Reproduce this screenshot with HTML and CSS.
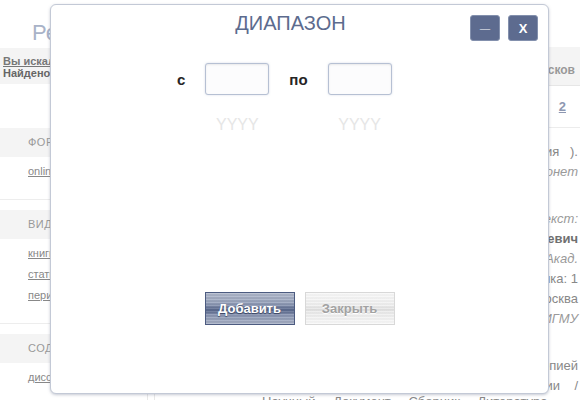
FILE: index.html
```html
<!DOCTYPE html>
<html lang="ru">
<head>
<meta charset="utf-8">
<title>Диапазон</title>
<link rel="stylesheet" href="styles.css">
</head>
<body>
<div class="page">
  <h1 class="page-title">Результаты поиска</h1>
  <div class="layout">
    <aside class="sidebar">
      <div class="query">
        <div><a class="query-link">Вы искали: диапазон</a></div>
        <div class="query-count">Найдено: 128</div>
      </div>
      <div class="facets">
        <section class="facet">
          <div class="facet-head">ФОРМАТ</div>
          <ul class="facet-list"><li><a>online</a></li></ul>
        </section>
        <section class="facet">
          <div class="facet-head">ВИД</div>
          <ul class="facet-list"><li><a>книги</a></li><li><a>статьи</a></li><li><a>периодика</a></li></ul>
        </section>
        <section class="facet">
          <div class="facet-head">СОДЕРЖАНИЕ</div>
          <ul class="facet-list"><li><a>диссертации</a></li></ul>
        </section>
      </div>
    </aside>
    <main class="results">
      <div class="thead">Кол-во поисков</div>
      <div class="pager"><a class="page-link">2</a></div>
      <div class="entries">
        <div class="group">
          <div class="line">(по материалам заседания&nbsp;&nbsp; ).</div>
          <div class="line line-italic">Серия: Электронные монет</div>
        </div>
        <div class="group">
          <div class="line line-italic">Подробный текст:</div>
          <div class="line line-bold">Петров Алексей Николаевич</div>
          <div class="line line-italic">Вестник Акад.</div>
          <div class="line">Оценка: 1</div>
          <div class="line">г. Москва</div>
          <div class="line line-italic">Изд-во МИГМУ</div>
        </div>
        <div class="group">
          <div class="line">вместе с копией</div>
          <div class="line">Материалы конференции&nbsp;&nbsp;&nbsp;&nbsp;/</div>
          <div class="line line-foot">Научный Документ Сборник Литература</div>
        </div>
      </div>
    </main>
  </div>
</div>

<div class="modal">
  <div class="modal-head">
    <h2 class="modal-title">ДИАПАЗОН</h2>
    <div class="win-controls">
      <button class="win-btn win-min">_</button>
      <button class="win-btn win-close">X</button>
    </div>
  </div>
  <div class="range">
    <span class="range-label">с</span>
    <input class="range-input" type="text">
    <span class="range-label">по</span>
    <input class="range-input" type="text">
    <span class="range-hint hint-from">YYYY</span>
    <span class="range-hint hint-to">YYYY</span>
  </div>
  <div class="modal-foot">
    <button class="btn btn-primary">Добавить</button>
    <button class="btn btn-secondary">Закрыть</button>
  </div>
</div>
</body>
</html>
```

FILE: styles.css
```css
* { box-sizing: border-box; }
html, body { margin: 0; padding: 0; }
body {
  width: 580px;
  height: 400px;
  overflow: hidden;
  position: relative;
  background: #fff;
  font-family: "Liberation Sans", Arial, sans-serif;
  color: #777;
}

/* background page */
.page { width: 580px; }
.page-title {
  margin: 0;
  height: 47px;
  padding: 20px 0 0 32px;
  font-size: 22px;
  line-height: 26px;
  font-weight: normal;
  color: #a9b3c8;
  white-space: nowrap;
}
.layout { display: flex; }
.sidebar {
  width: 148px;
  flex: none;
  border-right: 1px solid #e8e8e8;
}
.query {
  margin-top: 1px;
  height: 36px;
  padding: 7px 0 0 3px;
  background: #f4f4f4;
  font-size: 11px;
  line-height: 12px;
  font-weight: bold;
  white-space: nowrap;
}
.query-link { color: #777; text-decoration: underline; }
.query-count { color: #666; }
.facets { margin-top: 44px; }
.facet {
  border-bottom: 1px solid #ededed;
  margin-bottom: 10px;
  padding-bottom: 17px;
}
.facet-head {
  height: 29px;
  line-height: 29px;
  padding-left: 28px;
  background: #f4f4f4;
  font-size: 11px;
  color: #999;
  letter-spacing: 0.5px;
}
.facet-list {
  list-style: none;
  margin: 0;
  padding: 4px 0 0 28px;
}
.facet-list li { font-size: 11px; line-height: 21px; height: 21px; }
.facet-list a { color: #888; text-decoration: underline; }

.results {
  flex: 1;
  min-width: 0;
  margin-left: 6px;
  border-left: 1px solid #e8e8e8;
}
.thead {
  height: 39px;
  padding: 8px 5px 0 0;
  line-height: 30px;
  background: #f4f4f4;
  border-bottom: 1px solid #e6e6e6;
  text-align: right;
  font-size: 12px;
  font-weight: bold;
  color: #999;
}
.pager {
  height: 42px;
  line-height: 41px;
  padding-right: 14px;
  border-bottom: 1px solid #ececec;
  text-align: right;
  font-size: 13px;
  font-weight: bold;
}
.page-link { color: #8d97b1; text-decoration: underline; }
.entries { padding-top: 14px; }
.group + .group { margin-top: 27px; }
.line {
  height: 20px;
  line-height: 20px;
  padding-right: 2px;
  text-align: right;
  white-space: nowrap;
  font-size: 13px;
  color: #888;
}
.line-italic { font-style: italic; color: #9a9a9a; }
.line-bold { font-weight: bold; color: #707070; }
.line-foot {
  height: 10px;
  line-height: 12px;
  text-align: left;
  padding-left: 107px;
  word-spacing: 14px;
  color: #888;
}

/* modal */
.modal {
  position: absolute;
  left: 50px;
  top: 4px;
  width: 499px;
  height: 390px;
  display: flex;
  flex-direction: column;
  background: #fff;
  border: 1px solid #c3c9d6;
  border-radius: 6px;
  box-shadow: 0 1px 3px rgba(90, 100, 130, 0.35);
}
.modal-head {
  position: relative;
  padding: 6px 18px 0 0;
}
.modal-title {
  margin: 0;
  font-size: 20px;
  line-height: 24px;
  font-weight: normal;
  color: #5c6b8e;
  text-align: center;
}
.win-controls {
  position: absolute;
  top: 10px;
  right: 10px;
  display: flex;
  gap: 8px;
}
.win-btn {
  width: 30px;
  height: 26px;
  padding: 0;
  margin: 0;
  border: 1px solid #8390ad;
  border-radius: 3px;
  background: #5d6b8f;
  color: #fff;
  font-family: "Liberation Sans", Arial, sans-serif;
  font-weight: bold;
  text-align: center;
  display: block;
}
.win-min { font-size: 18px; line-height: 12px; padding-bottom: 12px; }
.win-close { font-size: 13px; line-height: 17px; }

.range {
  display: grid;
  grid-template-columns: auto 64px auto 64px;
  column-gap: 20px;
  row-gap: 21px;
  align-items: center;
  justify-content: start;
  margin: 28px 0 0 126px;
}
.range-label {
  font-size: 15px;
  font-weight: bold;
  color: #252525;
}
.range-input {
  width: 64px;
  height: 32px;
  margin: 0;
  padding: 0 4px;
  border: 1px solid #b6c0d3;
  border-radius: 3px;
  background: #fcfcfd;
  box-shadow: inset 0 1px 2px rgba(0, 0, 0, 0.08), 0 0 2px rgba(170, 180, 205, 0.5);
  outline: none;
}
.range-hint {
  grid-row: 2;
  justify-self: center;
  font-size: 16px;
  line-height: 18px;
  color: #e6e6e6;
}
.hint-from { grid-column: 2; }
.hint-to { grid-column: 4; }

.modal-foot {
  margin-top: auto;
  margin-bottom: 68px;
  display: flex;
  justify-content: center;
  gap: 10px;
}
.btn {
  width: 90px;
  height: 33px;
  margin: 0;
  padding: 0;
  font-family: "Liberation Sans", Arial, sans-serif;
  font-size: 13px;
  font-weight: bold;
  border-radius: 0;
}
.btn-primary {
  border: 1px solid #4c5b80;
  color: #fff;
  text-shadow: 0 1px 1px rgba(30, 40, 70, 0.7);
  background:
    repeating-linear-gradient(to bottom, rgba(255, 255, 255, 0.14) 0 1px, rgba(0, 0, 0, 0.05) 1px 3px),
    linear-gradient(to bottom, #b3bbce 0%, #9aa5be 30%, #7f8cab 42%, #5e6d91 50%, #5e6d91 60%, #8a96b3 70%, #a9b2c7 100%);
}
.btn-secondary {
  border: 1px solid #d8d8d8;
  color: #a2a2a2;
  text-shadow: 0 1px 0 #fff;
  background:
    repeating-linear-gradient(to bottom, rgba(255, 255, 255, 0.35) 0 1px, rgba(0, 0, 0, 0.015) 1px 3px),
    linear-gradient(to bottom, #f6f6f6 0%, #ececec 40%, #dedede 52%, #e8e8e8 62%, #f7f7f7 100%);
}
```
